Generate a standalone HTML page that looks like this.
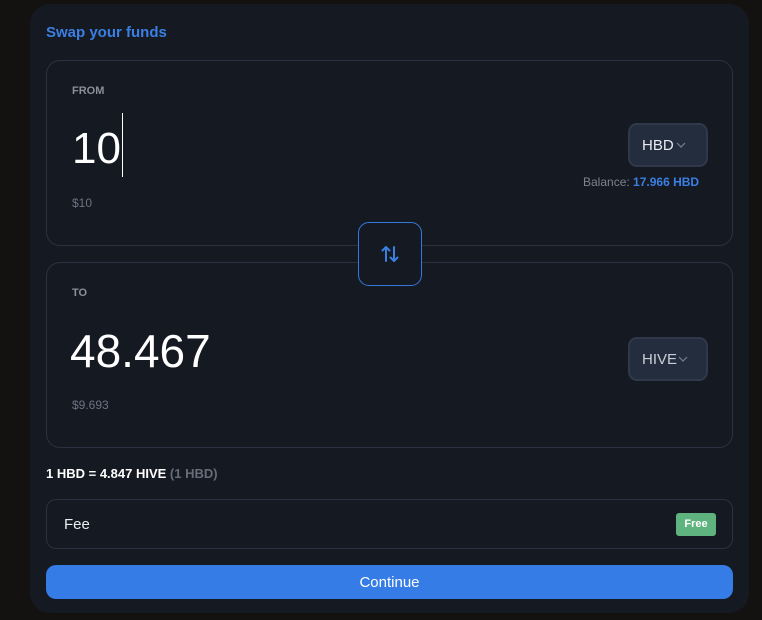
<!DOCTYPE html>
<html><head><style>
*{box-sizing:border-box;margin:0;padding:0}
body{width:762px;height:620px;background:#141111;font-family:"Liberation Sans",sans-serif;position:relative;overflow:hidden}
.card{position:absolute;left:30px;top:4px;width:719px;height:609px;background:#151a22;border-radius:20px}
.a{position:absolute}
.box{position:absolute;left:46px;width:687px;border:1px solid #2a3242;border-radius:14px}
.lbl{font-size:11px;font-weight:bold;color:#8a8f98}
.sel{position:absolute;left:628px;width:80px;height:44px;background:#232d3d;border:2px solid #2f394a;border-radius:9px;color:#e8ebf0;font-size:15px;padding:12px 0 0 12px}
.sel svg{position:absolute;top:17px}
</style></head><body>
<div class="card"></div>
<div class="a" style="left:46px;top:24px;font-size:15px;font-weight:bold;color:#3a7fe3">Swap your funds</div>
<div class="box" style="top:60px;height:186px"></div>
<div class="a lbl" style="left:72px;top:85px">FROM</div>
<div class="a" style="left:72px;top:125px;font-size:44px;color:#fff;line-height:48px">10</div>
<div class="a" style="left:122px;top:113px;width:1px;height:64px;background:#fff"></div>
<div class="a" style="left:72px;top:196px;font-size:12px;color:#6c7380">$10</div>
<div class="sel" style="top:123px">HBD<svg style="left:46px" width="10" height="6" viewBox="0 0 10 6"><path d="M1 1l4 4 4-4" fill="none" stroke="#777f8a" stroke-width="1.2"/></svg></div>
<div class="a" style="left:583px;top:175px;font-size:12px;color:#7c838e">Balance: <b style="color:#3a7fe3">17.966 HBD</b></div>
<div class="box" style="top:262px;height:186px"></div>
<div class="a" style="left:358px;top:222px;width:64px;height:64px;background:#151a22;border:1px solid #3578dc;border-radius:11px">
<svg class="a" style="left:21px;top:21px" width="20" height="20" viewBox="0 0 20 20"><path d="M6 17V3M2.5 6.5L6 3l3.5 3.5M14 3v14M10.5 13.5L14 17l3.5-3.5" fill="none" stroke="#3a7fe3" stroke-width="2" stroke-linecap="round" stroke-linejoin="round"/></svg></div>
<div class="a lbl" style="left:72px;top:287px">TO</div>
<div class="a" style="left:70px;top:326px;font-size:46px;color:#fff;line-height:50px">48.467</div>
<div class="a" style="left:72px;top:398px;font-size:12px;color:#6c7380">$9.693</div>
<div class="sel" style="top:337px;color:#c9ced6">HIVE<svg style="left:48px" width="10" height="6" viewBox="0 0 10 6"><path d="M1 1l4 4 4-4" fill="none" stroke="#777f8a" stroke-width="1.2"/></svg></div>
<div class="a" style="left:46px;top:466px;font-size:13px;font-weight:bold;color:#fff">1 HBD = 4.847 HIVE <span style="color:#666d78">(1 HBD)</span></div>
<div class="box" style="top:499px;height:50px;border-radius:10px"></div>
<div class="a" style="left:64px;top:516px;font-size:15px;color:#e8ebf0">Fee</div>
<div class="a" style="left:676px;top:513px;width:40px;height:23px;background:#5fb37f;border-radius:3px;color:#fff;font-size:11px;font-weight:bold;text-align:center;line-height:23px">Free</div>
<div class="a" style="left:46px;top:565px;width:687px;height:34px;background:#367ce6;border-radius:10px;color:#fff;font-size:15px;text-align:center;line-height:35px">Continue</div>
</body></html>
